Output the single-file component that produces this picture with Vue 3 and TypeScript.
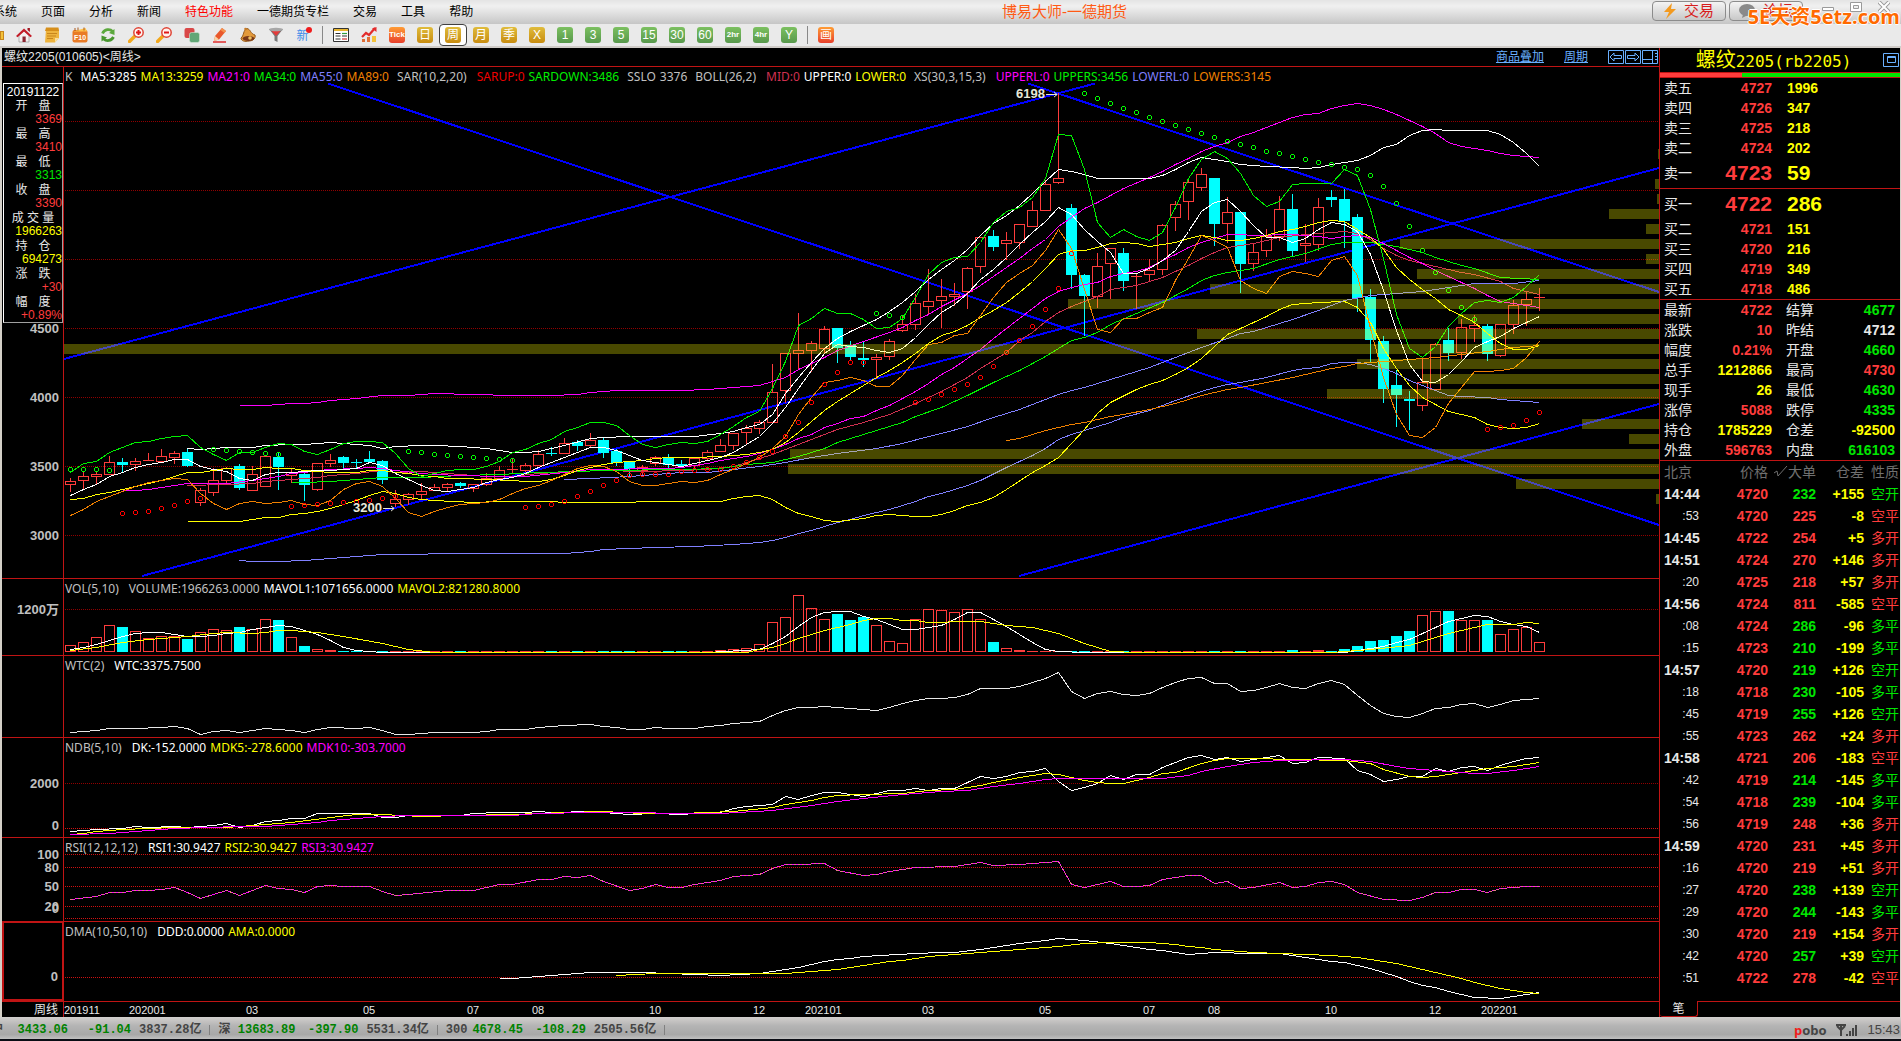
<script setup lang="ts">
type Series = { color: string; pts: string; dash?: string }
type Legend = { text: string; color: string; gap?: boolean }
type Level = { y: number; label?: string; labelY?: number; bright?: boolean }
type Panel = {
  id: string
  top: number
  height: number
  legend: Legend[]
  levels: Level[]
  series: Series[]
}

const PLOT_LEFT = 64
const PLOT_WIDTH = 1595
const STEP = 13

const xAt = (i: number): number => PLOT_LEFT + 6 + i * STEP + 0.5
const path = (pts: string): string =>
  pts
    .trim()
    .split(/\s+/)
    .map((p) => {
      const [i, y] = p.split(',').map(Number)
      return `${xAt(i)},${y + 0.5}`
    })
    .join(' ')

// high, body top, body bottom, low; a trailing d marks a falling week
const candleRows = `478 481 484 492|471 476 480 489|472 474 476 484|456 462 474 474|458 462 465 472 d|458 461 464 471|453 460 460 461|449 456 461 463|451 453 457 464|449 452 466 467 d
488 490 502 506|468 480 492 496|467 468 480 483|464 466 488 490 d|466 474 490 490|456 456 486 486|453 457 467 490 d|468 472 475 483|472 474 485 501 d|463 463 489 491
454 460 463 467|456 457 463 468 d|459 462 463 469 d|451 459 462 463 d|460 461 480 484 d|490 499 503 507|493 494 499 505|483 491 494 499|484 487 490 491|483 484 487 492
482 483 486 488 d|484 484 488 492|473 478 484 486|466 470 478 480|459 469 469 473|463 465 470 472|450 454 465 466|447 453 454 456 d|438 443 453 453|440 442 446 451 d
433 440 445 447|438 440 453 458 d|449 451 463 466 d|461 462 469 476 d|465 467 470 477|456 457 463 466|454 457 465 469 d|460 464 466 468 d|457 458 465 468|450 452 458 461
439 445 451 451|433 433 445 450|425 428 432 444|420 422 428 434|364 392 422 423|353 353 390 403|313 350 353 369|341 343 350 372|326 329 348 354|328 328 348 363 d
341 345 357 360 d|341 358 360 367 d|354 357 359 379|339 341 356 360|315 324 330 332|294 303 324 330|269 301 306 315|279 296 300 328|283 294 296 306|267 268 291 309
237 237 266 273|230 236 247 251 d|232 240 243 260|224 224 242 249|201 210 226 226|180 184 210 210|93 178 182 184|204 208 275 289 d|274 275 296 336 d|253 266 296 308
248 248 263 299|248 253 281 291 d|273 276 276 309|259 270 274 282|224 225 269 275|201 204 217 231|180 182 201 220|168 174 187 191|178 178 224 246 d|197 212 223 243
212 212 264 293 d|244 252 263 271|229 236 250 257|196 209 236 241|194 209 251 256 d|224 243 245 262|198 207 244 251|190 197 200 207 d|189 199 221 248 d|214 217 298 312 d
289 297 340 362 d|336 341 389 403 d|370 385 395 427 d|391 399 401 430 d|357 382 405 411|343 344 389 390|328 340 353 361 d|319 327 352 359|315 325 328 342|324 326 354 361 d
324 324 355 357|300 305 324 334|292 299 304 326|288 297 297 311`

const candles = candleRows.split(/[|\n]/).map((row, i) => {
  const c = row.trim().split(' ')
  const [high, top, bottom, low] = c.slice(0, 4).map(Number)
  return { i, x: xAt(i), high, top, bottom, low, down: c[4] === 'd' }
})

const volumeTops: Record<number, number> = {
  0: 645, 1: 642, 2: 637, 3: 625, 4: 627, 5: 631, 6: 638, 7: 636, 8: 636, 9: 639, 10: 632, 11: 629, 12: 630, 13: 627,
  14: 629, 15: 619, 16: 620, 17: 637, 18: 646, 19: 649, 20: 650, 50: 650, 51: 649, 52: 648, 53: 644, 54: 622, 55: 617,
  56: 595, 57: 608, 58: 619, 59: 614, 60: 620, 61: 617, 62: 625, 63: 641, 64: 643, 65: 619, 66: 609, 67: 610, 68: 612,
  69: 609, 70: 619, 71: 642, 72: 648, 73: 650, 94: 650, 96: 650, 98: 649, 99: 646, 100: 641, 101: 640, 102: 636,
  103: 631, 104: 615, 105: 611, 106: 611, 107: 620, 108: 620, 109: 620, 110: 634, 111: 629, 112: 627, 113: 642,
}
const volumes = candles.map((c) => ({ ...c, vTop: volumeTops[c.i] ?? 651 }))

const profile: [number, number][] = [
  [149, 1658], [179, 1655], [194, 1657], [209, 1609], [224, 1646], [239, 1400], [254, 1646], [269, 1417], [284, 1210],
  [299, 1068], [314, 1458], [329, 1197], [344, 64], [359, 1357], [374, 1422], [389, 1327], [419, 1582], [434, 1629],
  [449, 790], [464, 788], [479, 1516], [494, 1656],
]

const trendLines = ['328,83.5 1659,525', '64,359 1095,83.5', '1028,83.5 1659,292', '142,576 1659,168', '1019,576 1659,404']

const dots = (s: string) => s.trim().split(/\s+/).map((p) => p.split(',').map(Number))
const sarDown = dots(`0,469 1,469 2,469 3,470 11,449 12,450 13,451 14,452 15,453 16,454 26,451 27,452 28,454 29,455 30,456
31,457 32,458 33,459 34,460 62,313 63,315 64,317 78,93 79,98 80,103 81,108 82,112 83,117 84,121 85,125 86,129 87,133
88,137 89,141 90,144 91,147 92,151 93,153 94,156 95,159 96,162 97,164 98,167 99,169 100,175 101,186 102,203 103,226
104,250 105,272 106,290 107,307 108,319`)
const sarUp = dots(`4,513 5,512 6,511 7,508 8,505 9,501 10,498 17,506 18,505 19,504 20,503 21,502 22,501 23,500 24,498 25,496
35,507 36,506 37,504 38,501 39,496 40,491 41,485 42,480 43,475 44,474 45,474 46,474 47,471 48,470 49,469 50,469 51,466
52,462 53,457 54,451 55,436 56,422 57,402 58,384 59,372 60,362 61,362 65,402 66,399 67,394 68,389 69,384 70,377 71,366
72,352 73,340 74,326 75,309 76,288 77,253 109,429 110,427 111,425 112,420 113,412`)

const WHITE = '#fff'
const YELLOW = '#ff0'
const PINK = '#f0f'
const GREEN = '#00f000'
const SLATE = '#8080ff'
const ORANGE = '#f08000'
const CRIMSON = '#d03050'
const GREY = '#c0c0c0'

const mainSeries: Series[] = [
  { color: PINK, pts: `13,405 15,405 17,403 18,403 19,402 20,400 22,398 24,395 26,395 28,393 29,393 30,394 32,394 33,395 37,395 39,394 40,392 42,390 47,390 49,389 51,387 53,385 54,381 55,377 56,369 58,357 59,350 61,341 63,332 64,327 65,320 66,314 67,306 69,293 70,285 71,276 72,267 73,258 74,248 75,239 76,226 77,217 78,208 79,202 81,188 83,177 84,171 85,164 86,158 87,151 88,146 89,142 90,136 91,132 92,127 94,117 95,114 96,113 97,108 98,105 99,103 100,105 101,109 102,114 103,120 104,126 105,133 106,142 107,146 109,150 110,153 111,155 113,157` },
  { color: SLATE, pts: `13,560 14,561 16,561 18,560 19,559 21,557 24,554 27,554 28,553 38,553 40,551 41,549 45,547 48,546 51,544 53,542 54,540 55,537 56,533 57,530 59,522 60,519 61,515 63,509 65,501 66,496 67,493 69,485 70,480 72,467 73,461 74,455 75,448 76,439 77,434 79,426 80,422 81,417 83,410 85,400 87,391 88,387 89,384 90,382 92,377 94,370 95,368 96,367 97,363 98,362 99,362 100,364 101,368 102,373 103,380 104,385 106,395 107,396 109,397 110,399 113,402` },
  { color: YELLOW, pts: `9,521 13,521 15,517 16,517 17,514 18,513 19,511 20,508 22,500 23,495 24,491 25,493 26,497 27,499 28,500 31,502 33,501 37,501 38,502 43,502 44,501 50,501 51,498 52,496 53,495 54,499 55,507 56,513 57,516 58,520 59,521 61,518 62,515 63,514 65,516 66,516 67,514 68,510 69,505 70,502 71,497 72,489 74,472 75,465 76,457 77,443 78,429 79,413 80,402 82,389 83,384 84,380 85,374 86,367 87,358 88,346 89,334 90,328 92,316 93,309 94,304 96,302 98,301 99,307 100,322 101,348 102,368 103,385 104,397 105,404 106,411 107,414 108,417 109,424 110,427 111,428 112,427 113,423` },
  { color: WHITE, pts: `9,448 10,449 12,447 14,447 15,445 17,444 18,444 20,442 23,445 24,448 25,446 27,445 28,445 30,446 32,448 34,452 35,452 36,451 38,445 40,438 41,437 43,436 48,436 50,433 51,431 52,427 53,424 54,414 55,393 56,377 57,362 58,348 59,338 60,331 61,325 62,319 63,311 64,302 65,291 66,279 67,269 68,260 69,249 70,235 71,223 72,215 73,205 74,193 75,181 76,169 77,171 78,174 79,178 83,178 84,175 85,169 86,162 87,157 89,161 90,164 92,166 94,167 95,168 96,167 97,164 99,160 100,155 101,147 102,144 103,135 104,130 105,129 106,130 109,130 110,134 111,142 112,153 113,166` },
  { color: CRIMSON, pts: `9,485 12,484 14,483 15,481 17,479 19,477 20,475 22,473 24,470 25,472 27,471 28,472 30,474 32,476 34,476 36,473 39,471 41,470 44,471 47,470 49,469 51,466 52,462 53,458 54,454 55,449 57,439 58,434 59,429 61,422 63,414 65,403 67,391 69,377 70,368 72,352 73,340 74,332 75,321 76,312 77,306 79,296 80,289 82,285 84,277 86,265 87,258 88,252 89,247 91,243 93,237 95,234 97,232 98,231 99,233 100,239 101,248 102,255 103,260 105,266 107,272 108,274 110,281 111,288 113,294` },
  { color: ORANGE, pts: `72,440 73,438 74,434 75,430 76,427 77,424 78,422 80,416 81,414 83,409 85,403 87,395 89,389 90,387 92,382 94,377 96,371 97,368 98,366 99,363 101,361 103,359 105,357 107,354 109,351 111,347 113,345` },
  { color: SLATE, pts: `38,479 40,478 43,476 45,474 47,472 49,472 51,469 53,466 55,462 57,457 59,453 62,448 64,443 66,436 67,433 69,426 71,417 73,409 75,399 76,394 77,390 78,387 80,379 83,367 85,357 87,347 89,338 90,333 91,331 92,327 94,319 96,310 98,300 100,295 102,293 104,291 106,287 108,283 111,283 113,280` },
  { color: GREEN, pts: `17,482 18,482 20,481 22,479 24,477 27,477 30,475 33,474 36,472 39,471 41,470 47,469 50,468 52,464 54,462 55,459 56,456 58,448 59,442 61,434 63,426 64,422 65,416 67,407 69,395 71,382 73,370 75,356 76,348 77,340 78,337 79,332 80,324 82,313 84,302 86,288 87,280 88,275 89,272 91,268 93,259 95,253 97,244 98,242 100,242 101,244 102,246 104,252 105,257 107,265 108,268 110,277 113,279` },
  { color: PINK, pts: `4,490 5,490 6,489 7,487 8,485 9,483 12,483 14,480 15,478 16,476 17,473 18,472 19,470 20,469 22,468 23,467 24,468 25,470 27,473 28,474 30,475 33,476 35,476 38,472 40,469 46,468 47,467 48,465 49,463 50,460 51,458 52,456 53,453 54,449 55,444 56,438 57,434 58,427 59,423 60,418 61,416 62,410 63,405 65,391 66,383 67,374 68,367 69,358 70,349 71,338 72,328 73,318 74,308 75,298 76,291 77,287 78,284 79,282 80,276 81,273 82,271 83,267 84,260 85,254 86,247 87,242 88,238 89,234 90,234 91,235 94,234 96,236 97,238 98,236 99,235 100,237 101,243 102,250 103,257 104,263 105,270 106,276 107,282 108,288 109,295 110,301 111,303 112,305 113,307` },
  { color: YELLOW, pts: `0,499 1,498 2,494 3,492 4,489 5,486 6,483 7,480 8,476 9,472 10,472 11,470 12,468 13,469 14,469 15,467 16,468 17,468 18,470 19,471 20,472 22,472 23,470 24,470 25,472 26,473 27,475 28,476 29,478 30,478 32,479 34,480 35,481 36,481 37,479 38,475 39,470 40,467 41,464 42,462 43,461 44,460 45,458 46,457 48,457 50,456 51,455 52,454 53,452 54,449 55,442 56,432 57,421 58,410 59,401 60,393 61,385 62,377 63,370 64,362 65,353 66,343 67,335 68,331 69,325 70,317 71,310 72,302 73,292 74,281 75,268 76,254 77,250 78,250 79,247 80,243 81,242 82,243 83,246 84,244 85,242 86,238 87,235 88,237 89,240 90,240 91,238 92,235 93,231 94,229 95,226 96,222 97,220 98,221 99,229 100,237 101,249 102,267 103,279 104,289 105,298 106,309 107,315 108,322 109,333 110,343 111,349 112,349 113,345` },
  { color: WHITE, pts: `0,495 1,489 2,484 3,476 4,472 5,467 6,464 7,462 8,459 9,459 10,466 11,469 12,471 13,478 14,480 15,474 16,472 17,472 18,471 19,470 20,470 21,469 22,468 23,462 24,465 25,473 26,479 27,485 28,490 29,491 30,489 31,487 32,482 33,479 34,477 35,473 36,467 37,462 38,457 39,452 40,447 41,447 42,450 43,455 44,460 45,462 46,464 47,466 48,463 49,460 50,457 51,452 52,444 53,436 54,423 55,407 56,388 57,370 58,353 59,344 60,346 61,347 62,350 63,352 64,348 65,337 66,324 67,312 68,304 69,293 70,279 71,269 72,257 73,244 74,232 75,221 76,207 77,214 78,229 79,241 80,252 81,273 82,273 83,268 84,260 85,250 86,231 87,211 88,202 89,199 90,211 91,225 92,237 93,237 94,242 95,238 96,229 97,222 98,224 99,231 100,254 101,290 102,330 103,364 104,381 105,382 106,374 107,361 108,347 109,341 110,336 111,328 112,322 113,316` },
  { color: GREEN, pts: `0,472 1,463 2,461 3,452 4,447 5,442 6,441 7,438 8,436 9,435 10,447 11,454 12,460 13,452 14,452 15,447 16,443 17,444 18,451 19,454 20,449 21,443 22,441 23,441 24,442 25,453 26,468 27,476 28,473 29,470 30,469 31,469 32,466 33,461 34,452 35,449 36,443 37,439 38,431 39,427 40,422 41,422 42,425 43,435 44,444 45,447 46,444 47,442 48,443 49,441 50,434 51,426 52,417 53,411 54,388 55,361 56,325 57,318 58,308 59,313 60,313 61,319 62,328 63,327 64,318 65,297 66,274 67,262 68,257 69,256 70,242 71,222 72,211 73,207 74,197 75,178 76,134 77,135 78,169 79,222 80,237 81,229 82,236 83,240 84,232 85,207 86,178 87,159 88,151 89,158 90,173 91,195 92,206 93,201 94,184 95,183 97,183 98,169 99,175 100,209 101,258 102,314 103,348 104,357 105,346 106,326 107,313 108,302 109,300 110,302 111,297 112,286 113,274` },
  { color: ORANGE, pts: `0,515 1,509 2,501 3,496 4,491 5,486 6,482 7,480 8,478 9,479 10,493 11,503 12,509 13,503 14,501 15,503 16,502 17,500 18,504 19,505 20,500 21,489 22,483 23,481 24,486 25,498 26,512 27,516 28,511 29,507 30,504 32,502 33,499 34,493 35,488 36,485 37,480 38,474 39,468 40,465 41,466 42,471 43,481 44,485 45,485 47,481 48,482 49,480 50,474 51,469 52,463 53,457 54,448 55,436 56,414 57,397 58,382 59,380 60,377 61,380 62,386 63,386 64,375 65,359 66,344 67,342 68,335 69,333 70,315 71,297 72,282 73,273 74,265 75,250 76,229 77,248 78,289 79,329 80,332 81,318 82,318 83,312 84,307 85,280 86,258 87,235 88,240 89,247 90,280 91,288 92,293 93,276 94,271 95,273 96,276 97,260 98,256 99,275 100,328 101,377 102,414 103,435 104,437 105,427 106,403 107,387 108,371 109,371 110,370 111,368 112,357 113,341` },
]

const rsi = `0,899 2,896 3,892 4,892 5,890 6,890 7,889 8,887 9,892 10,898 12,890 13,895 15,885 16,888 17,889 18,892 19,886 20,885 21,886 23,886 24,891 25,895 26,894 29,890 31,890 33,884 34,884 36,879 37,879 38,876 39,877 40,875 41,881 43,890 44,888 45,884 46,887 47,887 48,884 50,880 51,876 53,874 54,868 55,864 56,864 58,863 59,870 61,875 62,874 63,871 65,867 68,866 70,862 71,865 73,864 75,862 76,861 77,884 78,887 80,881 81,886 82,886 83,885 84,879 86,875 87,875 88,883 89,881 90,888 91,887 93,882 94,887 95,886 96,882 97,881 98,884 99,892 101,899 103,900 104,897 105,892 106,892 107,889 108,889 109,892 110,888 112,886 113,886`

const panels: Panel[] = [
  {
    id: 'main', top: 67, height: 511,
    legend: [
      { text: 'K', color: GREY, gap: true }, { text: 'MA5:3285', color: WHITE }, { text: 'MA13:3259', color: YELLOW },
      { text: 'MA21:0', color: PINK }, { text: 'MA34:0', color: GREEN }, { text: 'MA55:0', color: SLATE },
      { text: 'MA89:0', color: ORANGE, gap: true }, { text: 'SAR(10,2,20)', color: GREY }, { text: 'SARUP:0', color: '#f00000' },
      { text: 'SARDOWN:3486', color: GREEN, gap: true }, { text: 'SSLO', color: GREY }, { text: '3376', color: GREY, gap: true },
      { text: 'BOLL(26,2)', color: GREY }, { text: 'MID:0', color: CRIMSON }, { text: 'UPPER:0', color: WHITE },
      { text: 'LOWER:0', color: YELLOW, gap: true }, { text: 'XS(30,3,15,3)', color: GREY }, { text: 'UPPERL:0', color: PINK },
      { text: 'UPPERS:3456', color: GREEN }, { text: 'LOWERL:0', color: SLATE }, { text: 'LOWERS:3145', color: ORANGE },
    ],
    levels: [
      { y: 121 }, { y: 190 }, { y: 259 }, { y: 328, label: '4500' }, { y: 397, label: '4000' }, { y: 466, label: '3500' },
      { y: 535, label: '3000' },
    ],
    series: mainSeries,
  },
  {
    id: 'vol', top: 579, height: 76,
    legend: [
      { text: 'VOL(5,10)', color: GREY }, { text: 'VOLUME:1966263.0000', color: GREY },
      { text: 'MAVOL1:1071656.0000', color: WHITE }, { text: 'MAVOL2:821280.8000', color: YELLOW },
    ],
    levels: [{ y: 609, label: '1200万' }],
    series: [
      { color: WHITE, pts: `0,649 1,647 2,644 3,640 4,636 5,633 6,632 7,632 8,634 9,636 10,636 11,635 12,633 13,632 14,629 15,627 16,625 17,626 18,630 19,634 20,640 21,647 22,650 24,652 49,652 53,649 54,643 55,636 56,626 57,617 58,612 59,611 60,611 61,616 62,619 63,624 64,629 65,629 66,627 67,625 68,619 69,612 70,612 71,619 72,626 73,634 74,642 75,649 76,651 78,652 98,652 99,650 101,646 102,642 103,639 104,633 105,627 106,621 107,618 108,615 109,616 110,621 111,624 112,626 113,632` },
      { color: YELLOW, pts: `0,650 2,647 4,642 6,639 9,636 11,633 12,632 14,633 15,632 16,630 17,630 19,632 21,636 24,643 26,649 28,652 52,652 53,649 54,647 55,643 56,638 57,634 58,630 59,627 60,624 61,620 62,618 63,618 64,620 65,620 66,622 67,622 68,621 70,621 72,625 74,627 75,630 76,633 78,643 80,651 82,652 97,652 100,649 103,645 104,641 105,637 106,633 107,630 108,627 109,624 111,624 112,622 113,623` },
    ],
  },
  {
    id: 'wtc', top: 656, height: 81,
    legend: [{ text: 'WTC(2)', color: GREY }, { text: 'WTC:3375.7500', color: WHITE }],
    levels: [],
    series: [
      { color: '#e8e8e8', pts: `0,732 2,730 3,728 5,728 7,727 8,726 9,728 10,734 11,731 12,730 13,732 15,728 17,730 18,732 19,729 20,727 22,728 23,727 24,730 25,734 26,734 28,732 31,732 32,731 33,729 35,729 36,727 38,725 40,724 41,726 42,727 43,729 44,729 45,727 46,728 48,728 49,726 50,725 51,723 53,721 54,715 55,710 56,707 57,707 58,706 59,707 61,709 62,710 63,707 64,703 65,700 66,698 67,698 68,697 69,694 70,688 72,688 73,686 74,682 75,678 76,672 77,691 78,698 79,693 80,691 81,694 82,695 83,693 84,687 85,682 86,678 87,677 88,683 89,683 90,691 91,690 92,687 93,683 94,687 95,688 96,683 97,680 98,684 99,695 100,705 101,713 102,716 103,717 104,713 105,708 106,707 107,704 108,703 109,707 110,704 111,700 113,698` },
    ],
  },
  {
    id: 'ndb', top: 738, height: 99,
    legend: [
      { text: 'NDB(5,10)', color: GREY }, { text: 'DK:-152.0000', color: WHITE }, { text: 'MDK5:-278.6000', color: YELLOW },
      { text: 'MDK10:-303.7000', color: PINK },
    ],
    levels: [{ y: 783, label: '2000' }, { y: 828, label: '0', labelY: 825, bright: true }],
    series: [
      { color: WHITE, pts: `0,831 1,830 2,829 4,828 5,826 6,827 8,826 9,827 10,826 11,825 12,823 13,827 14,825 15,821 16,820 17,818 18,818 19,813 23,813 24,817 25,817 26,815 30,815 31,813 33,812 35,812 36,811 37,812 40,811 41,812 42,813 43,814 45,813 47,814 49,812 50,812 51,808 52,806 54,804 55,796 56,799 57,795 58,792 59,792 61,796 63,790 64,790 65,788 66,790 67,788 68,788 69,782 70,776 71,778 72,776 73,772 74,771 75,768 76,781 77,790 78,787 79,783 80,775 81,779 82,774 83,774 84,767 85,762 86,757 87,755 88,759 89,757 90,761 91,759 93,755 94,763 95,762 96,757 98,758 99,770 100,774 101,781 102,779 103,776 104,776 105,768 106,771 107,767 108,766 109,770 110,765 111,761 112,758 113,757` },
      { color: YELLOW, pts: `0,834 1,833 2,831 4,829 6,828 8,827 12,827 14,825 17,822 20,817 22,814 24,814 27,816 30,815 34,814 38,812 41,811 44,813 47,813 49,812 51,811 54,807 55,804 57,800 58,797 59,795 61,794 64,793 66,790 68,789 70,785 71,782 73,777 75,773 76,774 77,777 78,780 79,782 80,783 81,783 83,777 84,773 85,772 87,763 88,760 89,758 91,758 94,759 98,760 100,763 101,769 103,776 104,777 105,776 107,772 109,768 111,766 113,762` },
      { color: PINK, pts: `0,834 3,833 5,831 8,828 13,826 15,826 17,824 19,822 20,820 24,816 26,815 34,815 36,813 40,812 50,813 54,810 57,805 59,801 61,798 64,794 67,791 69,790 71,786 73,783 75,779 76,778 84,778 86,775 87,771 89,766 91,762 93,760 98,759 100,761 102,766 103,768 106,771 108,773 109,773 111,770 113,766` },
    ],
  },
  {
    id: 'rsi', top: 838, height: 83,
    legend: [
      { text: 'RSI(12,12,12)', color: GREY }, { text: 'RSI1:30.9427', color: WHITE }, { text: 'RSI2:30.9427', color: YELLOW },
      { text: 'RSI3:30.9427', color: PINK },
    ],
    levels: [
      { y: 854, label: '100', bright: true }, { y: 867, label: '80', bright: true }, { y: 886, label: '50', bright: true },
      { y: 906, label: '20', bright: true }, { y: 918, label: '0', labelY: 908, bright: true },
    ],
    series: [{ color: PINK, pts: rsi }, { color: '#e08080', pts: rsi, dash: '2 2' }],
  },
  {
    id: 'dma', top: 922, height: 79,
    legend: [{ text: 'DMA(10,50,10)', color: GREY }, { text: 'DDD:0.0000', color: WHITE }, { text: 'AMA:0.0000', color: YELLOW }],
    levels: [{ y: 977, label: '0', bright: true }],
    series: [
      { color: WHITE, pts: `33,978 34,978 36,976 38,974 40,972 44,972 48,974 50,975 53,973 54,971 56,967 57,964 58,961 59,959 60,958 61,956 65,953 67,952 68,952 70,949 73,943 75,940 76,938 78,940 80,943 83,949 84,950 86,954 88,952 91,953 93,953 95,957 97,961 98,962 100,968 101,972 102,976 103,981 104,985 105,987 106,991 108,997 110,998 112,994 113,992` },
      { color: YELLOW, pts: `42,975 45,973 55,973 57,971 59,969 61,965 63,961 64,960 66,956 69,953 73,949 76,946 78,943 80,942 83,942 85,944 86,946 87,947 88,949 91,952 97,955 99,957 102,963 105,972 107,978 108,982 110,988 112,992 113,993` },
    ],
  },
]

const pct = (v: number, total: number): string => `${(v / total) * 100}%`

const callouts = [
  { text: '6198', x: 1058, y: 93 },
  { text: '3200', x: 395, y: 507 },
]

const months: [number, string][] = [
  [0, '201911'], [5, '202001'], [14, '03'], [23, '05'], [31, '07'], [36, '08'], [45, '10'], [53, '12'], [57, '202101'],
  [66, '03'], [75, '05'], [83, '07'], [88, '08'], [97, '10'], [105, '12'], [109, '202201'],
]

const barInfo = [
  ['开盘', '3369', 'red'], ['最高', '3410', 'red'], ['最低', '3313', 'green'], ['收盘', '3390', 'red'],
  ['成交量', '1966263', 'yellow'], ['持仓', '694273', 'yellow'], ['涨跌', '+30', 'red'], ['幅度', '+0.89%', 'red'],
]

const asks = [['卖五', '4727', '1996'], ['卖四', '4726', '347'], ['卖三', '4725', '218'], ['卖二', '4724', '202'], ['卖一', '4723', '59']]
const bids = [['买一', '4722', '286'], ['买二', '4721', '151'], ['买三', '4720', '216'], ['买四', '4719', '349'], ['买五', '4718', '486']]

const quotes = [
  ['最新', '4722', 'red', '结算', '4677', 'green'], ['涨跌', '10', 'red', '昨结', '4712', 'white'],
  ['幅度', '0.21%', 'red', '开盘', '4660', 'green'], ['总手', '1212866', 'yellow', '最高', '4730', 'red'],
  ['现手', '26', 'yellow', '最低', '4630', 'green'], ['涨停', '5088', 'red', '跌停', '4335', 'green'],
  ['持仓', '1785229', 'yellow', '仓差', '-92500', 'yellow'], ['外盘', '596763', 'red', '内盘', '616103', 'green'],
]

const ticks = `14:44 4720 232 +155 空开 g|:53 4720 225 -8 空平 r|14:45 4722 254 +5 多开 r|14:51 4724 270 +146 多开 r|:20 4725 218 +57 多开 r|14:56 4724 811 -585 空平 r|:08 4724 286 -96 多平 g|:15 4723 210 -199 多平 g|14:57 4720 219 +126 空开 g|:18 4718 230 -105 多平 g|:45 4719 255 +126 空开 g|:55 4723 262 +24 多开 r|14:58 4721 206 -183 空平 r|:42 4719 214 -145 多平 g|:54 4718 239 -104 多平 g|:56 4719 248 +36 多开 r|14:59 4720 231 +45 多开 r|:16 4720 219 +51 多开 r|:27 4720 238 +139 空开 g|:29 4720 244 -143 多平 g|:30 4720 219 +154 多开 r|:42 4720 257 +39 空开 g|:51 4722 278 -42 空平 r`
  .split('|')
  .map((r) => r.split(' '))

const menus = ['系统', '页面', '分析', '新闻', '特色功能', '一德期货专栏', '交易', '工具', '帮助']

const tools: { name: string; art: string }[] = [
  { name: '主页', art: '<path d="M3 8v7h10V8L8 4z" fill="#f4f0f0" stroke="#888" stroke-width=".6"/><path d="M0 9 8 1.5 16 9l-1.6 1.200L8 4.600 1.600 10.200z" fill="#c41c28"/><path d="M11.500 1h2.400v4l-2.400-2z" fill="#a01822"/><path d="M6.500 9.500h3.200V15H6.500z" fill="#8c2430"/>' },
  { name: '便签', art: '<path d="M2 2.500h13v8.500l-4 4.500H1z" fill="#eeb43e"/><path d="M2 .5h12.500l.5 3.500H1z" fill="#d68f1b"/><path d="M15 11l-4 4.500V11z" fill="#f8dfa0"/><path d="M3 6.500h10M3 9h9M3 11.500h6" stroke="#c8861c"/>' },
  { name: 'F10', art: '<rect x=".5" y="3" width="15" height="12.500" rx="2" fill="#e97b26"/><path d="M1 4.500 13.500 1l1.500 3.500z" fill="#ffc24a"/><path d="M3 1v3M6 .5v3M12 .5v3" stroke="#a8581c"/><text x="8" y="12.500" font-family="Liberation Sans" font-size="7" font-weight="700" fill="#fff" text-anchor="middle">F10</text>' },
  { name: '刷新', art: '<path d="M2.500 6.500C4.500 2 10 1.500 12.500 4.500" fill="none" stroke="#5ba83c" stroke-width="2.800"/><path d="M14.500 2v6L9 6z" fill="#5ba83c"/><path d="M13.500 10C11.500 14 6.500 14.500 3.800 12" fill="none" stroke="#48962e" stroke-width="2.800"/><path d="M1.500 14.500v-6L7 10.500z" fill="#48962e"/>' },
  { name: '放大', art: '<path d="m1.500 14.500 5-5" stroke="#f3a81c" stroke-width="3.400" stroke-linecap="round"/><circle cx="10.500" cy="5.500" r="4.700" fill="#fff3f0" stroke="#df4435" stroke-width="1.500"/><path d="M8 5.500h5M10.500 3v5" stroke="#e01818" stroke-width="2"/>' },
  { name: '缩小', art: '<path d="m1.500 14.500 5-5" stroke="#f3a81c" stroke-width="3.400" stroke-linecap="round"/><circle cx="10.500" cy="5.500" r="4.700" fill="#fff3f0" stroke="#df4435" stroke-width="1.500"/><path d="M8 5.500h5" stroke="#e01818" stroke-width="2"/>' },
  { name: '叠加', art: '<rect x=".5" y="1" width="10" height="10" rx="2" fill="#d94848"/><rect x="5.500" y="5.500" width="10" height="10" rx="2" fill="#62a777" stroke="#d6e7da" stroke-width=".6"/>' },
  { name: '画笔', art: '<path d="m3 9 7-8 4 3-7 8.500-5 1.500z" fill="#e9582c"/><path d="m3 9 4 3.500-5 1.500z" fill="#f9d4a6"/><path d="m10 1 4 3-1.500 2-4-3z" fill="#f3914c"/><path d="M1 15h13" stroke="#df2c2c" stroke-width="1.500"/>' },
  { name: '预警', art: '<path d="M1 11C4 9 3 3 7 1.500c4 1 3 5 8 6.500 1 3-2 6-6 6-4 1-8 0-8-3z" fill="#e39a3b" stroke="#95591a"/><ellipse cx="8.500" cy="11.500" rx="5.800" ry="2.500" fill="#7a3918"/><circle cx="10" cy="11" r="1.800" fill="#f0c060"/><circle cx="5.500" cy="2" r="1.300" fill="#c47a28"/>' },
  { name: '过滤', art: '<path d="M1 2h14L9.500 9v6l-3-1.500V9z" fill="#777"/><path d="M3.500 4h9L8 9z" fill="#e33a3a"/><ellipse cx="8" cy="2.500" rx="7" ry="1.800" fill="#a7a7a7"/>' },
  { name: '新功能', art: '<text x="6.500" y="13" font-family="Noto Sans CJK SC" font-size="12" fill="#3d8ce8" text-anchor="middle">新</text><circle cx="13" cy="3" r="3" fill="#f01c1c"/>' },
]
const viewTools: { name: string; art: string }[] = [
  { name: '报价', art: '<path d="M.5 1.500h15v13H.5z" fill="#fff" stroke="#333"/><path d="M1 2h14v2H1z" fill="#e8b42c"/><path d="M2.500 6.500h5M2.500 9h5M9 9h5M2.500 12h5" stroke="#303030" stroke-width="1.200"/><path d="M9 6.500h5" stroke="#30a040" stroke-width="1.200"/><path d="M9 12h5" stroke="#d03030" stroke-width="1.200"/>' },
  { name: '走势', art: '<path d="M1 15v-3h3v3zM6 15v-5h3v5z" fill="#e06e36"/><path d="M11 15V9h4v6z" fill="#f3c23a"/><path d="m1 10 4-4 3 2 6-7" fill="none" stroke="#e32c2c" stroke-width="2.200"/><path d="M15.500 0v5L11 1.500z" fill="#e32c2c"/>' },
]
const chips: { text: string; tone: string; on?: boolean }[] = [
  { text: 'Tick', tone: 'hot' }, { text: '日', tone: 'gold' }, { text: '周', tone: 'gold', on: true }, { text: '月', tone: 'gold' },
  { text: '季', tone: 'gold' }, { text: 'X', tone: 'gold' }, { text: '1', tone: 'leaf' }, { text: '3', tone: 'leaf' },
  { text: '5', tone: 'leaf' }, { text: '15', tone: 'leaf' }, { text: '30', tone: 'leaf' }, { text: '60', tone: 'leaf' },
  { text: '2hr', tone: 'leaf' }, { text: '4hr', tone: 'leaf' }, { text: 'Y', tone: 'leaf' },
]

const indices = [
  { name: '沪', last: '3433.06', chg: '-91.04', amt: '3837.28亿' },
  { name: '深', last: '13683.89', chg: '-397.90', amt: '5531.34亿' },
  { name: '300', last: '4678.45', chg: '-108.29', amt: '2505.56亿' },
]
</script>

<template>
  <div class="app">
    <header class="menubar">
      <nav class="menus">
        <button v-for="m in menus" :key="m" type="button" :class="{ hotmenu: m === '特色功能' }">{{ m }}</button>
      </nav>
      <h1 class="title">博易大师-一德期货</h1>
      <div class="corner">
        <button type="button" class="pill">
          <svg viewBox="0 0 12 16" width="12" height="16"><path d="M8 0 0 9h5l-3 7L12 6H7z" fill="#f39a1f" /></svg>交易
        </button>
        <button type="button" class="pill">
          <svg viewBox="0 0 16 14" width="16" height="14"><ellipse cx="8" cy="6" rx="8" ry="6" fill="#8a8a8a" /><path d="m4 10-1 4 6-3z" fill="#8a8a8a" /></svg>论坛
        </button>
        <div class="wincontrols">
          <button type="button" aria-label="最小化"><svg viewBox="0 0 12 12" width="12" height="12"><path d="M.5 6.500h11v3H.5z" fill="#fff" stroke="#9a9a9a" /></svg></button>
          <button type="button" aria-label="最大化"><svg viewBox="0 0 12 12" width="12" height="12"><path d="M.5 1.500h11v9H.5zM3.500 4.500h5v3h-5z" fill="#fff" fill-rule="evenodd" stroke="#9a9a9a" /></svg></button>
          <button type="button" aria-label="关闭"><svg viewBox="0 0 12 12" width="12" height="12"><path d="m1 1 10 10M11 1 1 11" stroke="#9a9a9a" stroke-width="4" /><path d="m1 1 10 10M11 1 1 11" stroke="#fff" stroke-width="2" /></svg></button>
        </div>
        <span class="brand">5E天资5etz.com</span>
      </div>
    </header>

    <div class="toolbar">
      <span class="stub"></span>
      <button v-for="t in tools" :key="t.name" type="button" class="tool" :aria-label="t.name">
        <svg viewBox="0 0 16 16" width="16" height="16" v-html="t.art"></svg>
      </button>
      <span class="sep"></span>
      <button v-for="t in viewTools" :key="t.name" type="button" class="tool" :aria-label="t.name">
        <svg viewBox="0 0 16 16" width="16" height="16" v-html="t.art"></svg>
      </button>
      <button v-for="c in chips" :key="c.text" type="button" class="tool" :class="{ on: c.on }">
        <span class="chip" :class="[c.tone, { tight: c.text.length > 2 }]">{{ c.text }}</span>
      </button>
      <span class="sep"></span>
      <button type="button" class="tool"><span class="chip hot">画</span></button>
    </div>

    <main class="workspace">
      <section class="charts">
        <div class="charthead">
          <h2>螺纹2205(010605)&lt;周线&gt;</h2>
          <a href="#overlay">商品叠加</a>
          <a href="#period">周期</a>
          <div class="navicons">
            <button type="button" aria-label="上一个"><svg viewBox="0 0 16 14" width="16" height="14"><path d="M.5.5h15v13H.5zM2 7l4-4v2.500h7.500v3H6V11z" fill="none" stroke="#6ab0ff" /></svg></button>
            <button type="button" aria-label="下一个"><svg viewBox="0 0 16 14" width="16" height="14"><path d="M.5.5h15v13H.5zM14 7l-4-4v2.500H2.500v3H10V11z" fill="none" stroke="#6ab0ff" /></svg></button>
            <button type="button" aria-label="布局"><svg viewBox="0 0 16 14" width="16" height="14"><path d="M.5.5h15v13H.5zM.5 9.500h10M10.500.5v13M13 3.500h2M13 6.500h2M13 9.500h2" fill="none" stroke="#6ab0ff" /></svg></button>
          </div>
        </div>

        <div v-for="p in panels" :key="p.id" class="panel" :class="p.id">
          <div class="axis">
            <dl v-if="p.id === 'main'" class="barinfo">
              <dt class="date">20191122</dt>
              <template v-for="b in barInfo" :key="b[0]">
                <dt><span v-for="ch in b[0]" :key="ch">{{ ch }}</span></dt>
                <dd :class="b[2]">{{ b[1] }}</dd>
              </template>
            </dl>
            <template v-for="l in p.levels" :key="l.y">
              <span v-if="l.label" class="level" :style="{ top: pct((l.labelY ?? l.y) - p.top + 1, p.height) }">{{ l.label }}</span>
            </template>
          </div>
          <div class="plot">
            <svg :viewBox="`${PLOT_LEFT} ${p.top} ${PLOT_WIDTH} ${p.height}`" preserveAspectRatio="none" shape-rendering="crispEdges">
              <line
                v-for="l in p.levels" :key="l.y" :x1="PLOT_LEFT + 1" :x2="PLOT_LEFT + PLOT_WIDTH" :y1="l.y + 0.5" :y2="l.y + 0.5"
                :stroke="l.bright ? '#d01010' : '#900000'" stroke-dasharray="1 1"
              />
              <template v-if="p.id === 'main'">
                <polyline v-for="t in trendLines" :key="t" :points="t" fill="none" stroke="#00f" stroke-width="2" />
                <g v-for="c in candles" :key="c.i">
                  <template v-if="c.down">
                    <path :d="`M${c.x} ${c.high}V${c.low}`" stroke="#0ff" />
                    <rect :x="c.x - 5.5" :y="c.top" width="11" :height="Math.max(1, c.bottom - c.top)" fill="#0ff" />
                  </template>
                  <template v-else>
                    <path :d="`M${c.x} ${c.high}V${c.top}M${c.x} ${c.bottom}V${c.low}`" stroke="#ff3c3c" />
                    <rect :x="c.x - 5" :y="c.top + 0.5" width="10" :height="c.bottom - c.top" fill="none" stroke="#ff3c3c" />
                  </template>
                </g>
                <path v-for="i in [6, 34, 82, 113]" :key="i" :d="`M${xAt(i) - 5.5} ${candles[i].top + 0.5}h11`" stroke="#ff3c3c" />
              </template>
              <template v-if="p.id === 'vol'">
                <rect
                  v-for="c in volumes" :key="c.i" :x="c.down ? c.x - 5.5 : c.x - 5" :y="c.down ? c.vTop : c.vTop + 0.5"
                  :width="c.down ? 11 : 10" :height="c.down ? 652 - c.vTop : Math.max(0.1, 651 - c.vTop)" :fill="c.down ? '#0ff' : 'none'"
                  :stroke="c.down ? 'none' : '#ff3c3c'"
                />
              </template>
              <polyline v-for="(s, k) in p.series" :key="k" :points="path(s.pts)" fill="none" :stroke="s.color" :stroke-dasharray="s.dash" />
              <template v-if="p.id === 'main'">
                <circle v-for="d in sarDown" :key="d[0]" :cx="xAt(d[0])" :cy="d[1] + 0.5" r="2" fill="none" stroke="#0f0" />
                <circle v-for="d in sarUp" :key="d[0]" :cx="xAt(d[0])" :cy="d[1] + 0.5" r="2" fill="none" stroke="#f00" />
                <rect v-for="b in profile" :key="b[0]" :x="b[1]" :y="b[0]" :width="1659 - b[1]" height="10" fill="#ff0" fill-opacity=".285" />
              </template>
            </svg>
            <div class="legend">
              <span
                v-for="g in p.legend" :key="g.text" :class="{ wide: g.gap, formula: g.text.endsWith(')') }"
                :style="{ color: g.color }"
              >{{ g.text }}</span>
            </div>
            <template v-if="p.id === 'main'">
              <span v-for="c in callouts" :key="c.text" class="callout" :style="{ left: pct(c.x - PLOT_LEFT, PLOT_WIDTH), top: pct(c.y - p.top + 1, p.height) }">
                {{ c.text }}<svg viewBox="0 0 12 7" width="12" height="7"><path d="M0 3.500h11M8 1l3 2.500L8 6" fill="none" stroke="#e8e8d0" /></svg>
              </span>
            </template>
          </div>
        </div>

        <div class="timeaxis">
          <span class="period">周线</span>
          <div class="months">
            <span v-for="m in months" :key="m[0]" :style="{ left: pct(m[0] * STEP, PLOT_WIDTH) }">{{ m[1] }}</span>
          </div>
        </div>
      </section>

      <aside class="side">
        <div class="symbol">
          <h2><span class="cn">螺纹</span>2205(rb2205)</h2>
          <button type="button" aria-label="还原"><svg viewBox="0 0 16 14" width="16" height="14"><path d="M.5.5h15v13H.5zM4.500 3.500h8v6h-8zM4.500 4.500h8" fill="none" stroke="#6ab0ff" /></svg></button>
        </div>
        <div class="ratio"><i class="buy"></i><i class="sell"></i></div>
        <table class="book">
          <tbody>
            <tr v-for="(a, k) in asks" :key="a[0]" :class="{ bestask: k === 4 }"><th>{{ a[0] }}</th><td class="px">{{ a[1] }}</td><td class="qty">{{ a[2] }}</td></tr>
          </tbody>
          <tbody>
            <tr v-for="(b, k) in bids" :key="b[0]" :class="{ bestbid: k === 0 }"><th>{{ b[0] }}</th><td class="px">{{ b[1] }}</td><td class="qty">{{ b[2] }}</td></tr>
          </tbody>
        </table>
        <table class="quotes">
          <tbody>
            <tr v-for="q in quotes" :key="q[0] + q[3]">
              <th>{{ q[0] }}</th><td :class="q[2]">{{ q[1] }}</td><th class="second">{{ q[3] }}</th><td :class="q[5]">{{ q[4] }}</td>
            </tr>
          </tbody>
        </table>
        <table class="ticks">
          <thead>
            <tr><th class="t">北京</th><th>价格</th><th><svg viewBox="0 0 14 12" width="14" height="12"><path d="m0 8 3-2 1 5L13 1" fill="none" stroke="#707070" /></svg>大单</th><th>仓差</th><th>性质</th></tr>
          </thead>
          <tbody>
            <tr v-for="(t, k) in ticks" :key="k" :class="t[5]">
              <td class="t" :class="{ sec: t[0].startsWith(':') }">{{ t[0] }}</td>
              <td class="red">{{ t[1] }}</td><td class="tone">{{ t[2] }}</td><td class="yellow">{{ t[3] }}</td><td class="tone kind">{{ t[4] }}</td>
            </tr>
          </tbody>
        </table>
        <div class="tabs"><button type="button">笔</button><span class="rest"></span></div>
      </aside>
    </main>

    <footer class="status">
      <div class="indices">
        <div v-for="x in indices" :key="x.name" class="index">
          <span class="lead"><span>{{ x.name }}</span><b>{{ x.last }}</b></span><b class="chg">{{ x.chg }}</b><span>{{ x.amt }}</span><i></i>
        </div>
      </div>
      <div class="tray">
        <strong><em>p</em>obo</strong>
        <svg viewBox="0 0 21 12" width="21" height="12"><path d="M0 1h10M1 2l4 4 4-4M5 1v11" fill="none" stroke="#444" stroke-width="2" /><path d="M10 10h2v2h-2zM13 7h2v5h-2zM16 4h2v8h-2zM19 1h2v11h-2z" fill="#444" /></svg>
        <time>15:43</time>
      </div>
    </footer>
  </div>
</template>

<style>
html,
body {
  margin: 0;
  background: #000;
}
</style>

<style scoped>
* {
  box-sizing: border-box;
}
.app {
  display: flex;
  flex-direction: column;
  min-height: 100vh;
  min-width: 1300px;
  overflow: hidden;
  font: 12px/16px 'Liberation Sans', 'Noto Sans CJK SC', sans-serif;
  color: #e8e8e8;
  background: #000;
}
button {
  padding: 0;
  border: 0;
  background: none;
  font: inherit;
  color: inherit;
}
h1,
h2,
dl,
dd {
  margin: 0;
  font-weight: 400;
}
table {
  border-collapse: collapse;
  border-spacing: 0;
  table-layout: fixed;
  width: 100%;
}
th,
td {
  padding: 0;
  font-weight: 400;
}
.red {
  color: #ff3c3c;
}
.green {
  color: #00e600;
}
.yellow {
  color: #ff0;
}
.white {
  color: #e8e8e8;
}

.menubar {
  display: flex;
  justify-content: space-between;
  align-items: center;
  height: 24px;
  background: linear-gradient(#e4e4e4, #f0f0f0 25%, #e0e0e0 55%, #c6c6c6);
  color: #000;
}
.menus {
  display: flex;
  gap: 24px;
  margin-left: -7px;
  white-space: nowrap;
}
.hotmenu {
  color: #f00;
}
.title {
  padding-left: 4px;
  font-size: 15px;
  line-height: 20px;
  color: #ff5a14;
}
.corner {
  position: relative;
  display: flex;
  align-items: flex-start;
  gap: 3px;
  height: 22px;
  width: 249px;
}
.pill {
  display: flex;
  align-items: center;
  justify-content: center;
  gap: 8px;
  width: 74px;
  height: 20px;
  border: 1px solid #8c8c8c;
  border-radius: 4px;
  background: linear-gradient(#f4f4f4, #c8c8c8);
  color: #d81e1e;
  font-size: 15px;
  white-space: nowrap;
}
.wincontrols {
  display: flex;
  gap: 16px;
  padding-left: 16px;
}
.wincontrols svg {
  display: block;
}
.brand {
  position: absolute;
  right: 1px;
  top: 4px;
  font: 700 20px/24px 'Open Sans', 'Noto Sans CJK SC', sans-serif;
  color: #ff6a00;
  text-shadow: 1px 0 #fff, -1px 0 #fff, 0 1px #fff, 0 -1px #fff;
  white-space: nowrap;
}

.toolbar {
  display: flex;
  align-items: center;
  gap: 4px;
  height: 24px;
  border-bottom: 2px solid #d0ccc8;
  background: #eaeaea;
}
.stub {
  width: 4px;
  height: 9px;
  margin-right: 4px;
  background: #f3c23a;
  border: 1px solid #c8861c;
}
.tool {
  display: grid;
  place-items: center;
  width: 24px;
  height: 22px;
}
.tool svg {
  display: block;
}
.tool.on {
  width: 28px;
  margin: 0 -2px;
  border: 1px solid #404040;
  border-radius: 4px;
  background: #fff;
}
.sep {
  width: 1px;
  height: 18px;
  margin: 0 2px;
  background: #888;
}
.chip {
  display: block;
  width: 16px;
  height: 16px;
  border-radius: 3px;
  color: #fff;
  font-size: 12px;
  line-height: 16px;
  text-align: center;
}
.chip.hot {
  background: linear-gradient(#ff9c34, #e8402c);
}
.chip.gold {
  background: linear-gradient(#e0bc3c, #c88c10);
}
.chip.leaf {
  background: linear-gradient(#7cc060, #58984c);
}
.chip.tight {
  font-size: 8px;
  font-weight: 700;
}

.workspace {
  display: flex;
  flex: 1;
  border-left: 2px solid #d4d0c8;
  border-right: 1px solid #d4d0c8;
}
.charts {
  display: flex;
  flex-direction: column;
  flex: 1;
  min-width: 0;
}
.charthead {
  display: flex;
  align-items: center;
  gap: 20px;
  height: 18px;
  padding: 0 1px 0 2px;
}
.charthead h2 {
  flex: 1;
  font-size: 12px;
}
.charthead a {
  color: #6ab0ff;
}
.navicons {
  display: flex;
  gap: 1px;
}
.navicons svg,
.symbol svg {
  display: block;
}
.panel {
  display: flex;
  border-top: 1px solid #c01414;
}
.main {
  flex: 1;
  min-height: 400px;
}
.vol {
  height: 77px;
}
.wtc {
  height: 82px;
}
.ndb {
  height: 100px;
}
.rsi {
  height: 84px;
}
.dma {
  height: 80px;
}
.axis {
  position: relative;
  width: 62px;
  border-right: 1px solid #c01414;
}
.dma .axis {
  border: 2px solid #c01414;
  border-top-width: 1px;
}
.level {
  position: absolute;
  right: 4px;
  transform: translateY(-50%);
  font-size: 13px;
  font-weight: 700;
  line-height: 16px;
  color: #c0c0c0;
  white-space: nowrap;
}
.barinfo {
  width: 60px;
  height: 240px;
  margin: 16px 0 0 1px;
  border: 1px solid #fff;
  border-right-color: #a0a0a0;
  border-bottom-color: #a0a0a0;
  line-height: 13px;
}
.barinfo dt {
  display: flex;
  justify-content: space-around;
  height: 14px;
  padding: 1px 6px 0;
}
.barinfo dt.date {
  height: 15px;
  padding: 0;
  justify-content: center;
  line-height: 16px;
  color: #fff;
}
.barinfo dd {
  height: 14px;
  text-align: right;
}
.plot {
  position: relative;
  display: grid;
  grid-template: minmax(0, 1fr) / minmax(0, 1fr);
  flex: 1;
  min-width: 0;
}
.plot > svg {
  grid-area: 1 / 1;
  display: block;
  width: 100%;
  height: 100%;
  min-height: 0;
}
.legend {
  grid-area: 1 / 1;
  display: flex;
  align-self: start;
  gap: 4px;
  padding: 2px 0 0 1px;
  font-family: 'Noto Sans', sans-serif;
  white-space: nowrap;
}
.legend .wide {
  margin-right: 4px;
}
.legend .formula {
  margin-right: 6px;
}
.callout {
  position: absolute;
  display: flex;
  align-items: center;
  gap: 1px;
  transform: translate(-100%, -50%);
  font-size: 13px;
  font-weight: 700;
  color: #e8e8d8;
}
.timeaxis {
  display: flex;
  height: 16px;
  border-top: 1px solid #c01414;
}
.period {
  width: 62px;
  padding-right: 5px;
  border-right: 1px solid #c01414;
  text-align: right;
}
.months {
  position: relative;
  flex: 1;
  font-size: 11px;
}
.months span {
  position: absolute;
  top: 0;
}

.side {
  display: flex;
  flex-direction: column;
  width: 241px;
  border-left: 1px solid #c01414;
  font-size: 14px;
}
.symbol {
  display: flex;
  align-items: center;
  height: 24px;
  padding-right: 1px;
}
.symbol h2 {
  flex: 1;
  padding-left: 4px;
  text-align: center;
  font: 16px/24px 'DejaVu Sans Mono', monospace;
  color: #ff0;
}
.cn {
  font: 20px/24px 'Noto Sans CJK SC', sans-serif;
}
.ratio {
  display: flex;
  height: 6px;
  border: solid #c01414;
  border-width: 1px 0;
}
.buy {
  flex: 34;
  background: #ff3c3c;
}
.sell {
  flex: 66;
  background: #00e600;
}
.book tr,
.quotes tr {
  height: 20px;
  line-height: 20px;
}
.book tbody tr:last-child {
  border-bottom: 1px solid #c01414;
}
.book th,
.quotes th {
  width: 51px;
  padding-left: 4px;
  text-align: left;
}
.book td,
.quotes td,
.ticks td {
  font-weight: 700;
  white-space: nowrap;
}
.px {
  width: 61px;
  text-align: right;
  color: #ff3c3c;
}
.qty {
  padding-left: 15px;
  color: #ff0;
}
.book .bestask {
  height: 30px;
}
.book .bestbid {
  height: 31px;
}
.bestask td,
.bestbid td {
  font-size: 21px;
}
.quotes {
  border-bottom: 1px solid #c01414;
}
.quotes td {
  text-align: right;
}
.quotes td:nth-child(2) {
  width: 61px;
}
.quotes .second {
  width: 58px;
  padding-left: 14px;
}
.quotes td:last-child {
  padding-right: 5px;
}
.ticks tr {
  height: 22px;
  line-height: 22px;
}
.ticks th,
.ticks td {
  width: 48px;
  text-align: right;
}
.ticks th {
  color: #707070;
  white-space: nowrap;
}
.ticks th:nth-child(2),
.ticks td:nth-child(2) {
  width: 62px;
}
.ticks .t {
  width: 46px;
  padding-left: 4px;
  text-align: left;
}
.ticks .sec {
  padding-right: 7px;
  text-align: right;
  font-size: 12px;
  font-weight: 400;
}
.ticks th:last-child,
.ticks .kind {
  width: 36px;
  padding-right: 1px;
  font-weight: 400;
}
.g .tone {
  color: #00e600;
}
.r .tone {
  color: #ff3c3c;
}
.tabs {
  display: flex;
  height: 16px;
  margin-top: auto;
  font-size: 12px;
}
.tabs button {
  width: 38px;
  border: solid #c01414;
  border-width: 0 1px 1px 0;
  border-radius: 0 0 3px 3px;
}
.rest {
  flex: 1;
  border-top: 1px solid #c01414;
}

.status {
  display: flex;
  justify-content: space-between;
  align-items: center;
  height: 24px;
  padding-top: 3px;
  border-bottom: 2px solid #0a0c14;
  background: linear-gradient(#d2cfcd, #b4b4b4 40%, #a8a8a8 80%, #c0c0c0);
  color: #444;
  font-family: 'Liberation Mono', 'Noto Sans CJK SC', monospace;
  font-weight: 700;
}
.indices {
  display: flex;
  margin-left: -9px;
}
.index {
  display: flex;
  align-items: center;
  gap: 8px;
  padding-right: 8px;
}
.lead {
  display: flex;
  justify-content: space-between;
  width: 77px;
}
.index b {
  color: #008200;
}
.index .chg {
  width: 55px;
  text-align: right;
}
.index i {
  width: 1px;
  height: 10px;
  background: #808080;
}
.tray {
  display: flex;
  align-items: center;
  gap: 10px;
  padding-right: 1px;
  font: 13px/16px 'Liberation Sans', sans-serif;
}
.tray strong {
  font-family: 'Open Sans', sans-serif;
}
.tray em {
  font-style: normal;
  color: #f01c1c;
}
</style>
